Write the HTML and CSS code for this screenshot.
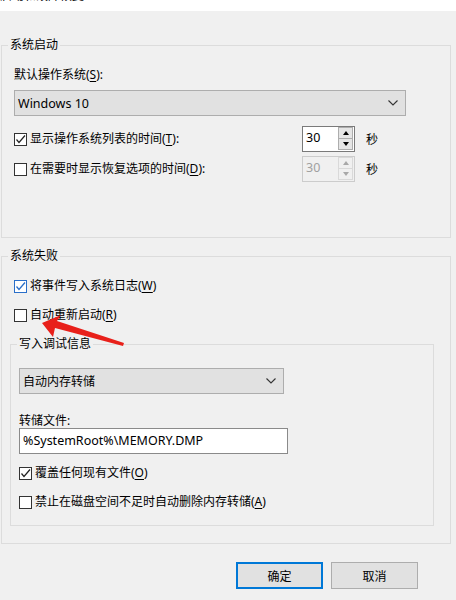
FILE: index.html
```html
<!DOCTYPE html>
<html lang="zh-CN">
<head>
<meta charset="utf-8">
<title>启动和故障恢复</title>
<link rel="stylesheet" href="styles.css">
</head>
<body>
<div class="titlebar"><span class="title-text">启动和故障恢复</span></div>
<div class="dialog">
  <fieldset class="group">
    <legend>系统启动</legend>
    <div class="startup-body">
      <div class="field-label">默认操作系统(<u>S</u>):</div>
      <div class="select select-os">
        <span class="latin">Windows 10</span>
        <svg class="chev" width="10" height="6" viewBox="0 0 10 6"><polyline points="0.5,0.5 5,5 9.5,0.5" fill="none" stroke="#333" stroke-width="1.1"/></svg>
      </div>
      <div class="spin-row">
        <div class="check check-wide">
          <span class="box"><svg width="11" height="11" viewBox="0 0 11 11"><polyline points="1.5,5.5 4,8.5 10,1.5" fill="none" stroke="#222" stroke-width="1.2"/></svg></span>
          <span>显示操作系统列表的时间(<u>T</u>):</span>
        </div>
        <div class="spinner">
          <span class="spin-value latin">30</span>
          <span class="spin-btns"><span class="spin-btn"><i class="tri-up"></i></span><span class="spin-btn"><i class="tri-down"></i></span></span>
        </div>
        <span class="unit">秒</span>
      </div>
      <div class="spin-row row-second">
        <div class="check check-wide">
          <span class="box"></span>
          <span>在需要时显示恢复选项的时间(<u>D</u>):</span>
        </div>
        <div class="spinner disabled">
          <span class="spin-value latin">30</span>
          <span class="spin-btns"><span class="spin-btn"><i class="tri-up"></i></span><span class="spin-btn"><i class="tri-down"></i></span></span>
        </div>
        <span class="unit">秒</span>
      </div>
    </div>
  </fieldset>

  <fieldset class="group group-fail">
    <legend>系统失败</legend>
    <div class="fail-body">
      <div class="check check-row first-check">
        <span class="box box-blue"><svg width="11" height="11" viewBox="0 0 11 11"><polyline points="1.5,5.5 4,8.5 10,1.5" fill="none" stroke="#2a6fc9" stroke-width="1.3"/></svg></span>
        <span>将事件写入系统日志(<u>W</u>)</span>
      </div>
      <div class="check check-row second-check">
        <span class="box"></span>
        <span>自动重新启动(<u>R</u>)</span>
      </div>
      <fieldset class="group inner-group">
        <legend>写入调试信息</legend>
        <div class="inner-body">
          <div class="select select-dump">
            <span>自动内存转储</span>
            <svg class="chev" width="10" height="6" viewBox="0 0 10 6"><polyline points="0.5,0.5 5,5 9.5,0.5" fill="none" stroke="#333" stroke-width="1.1"/></svg>
          </div>
          <div class="field-label dump-label">转储文件:</div>
          <div class="textbox latin">%SystemRoot%\MEMORY.DMP</div>
          <div class="check check-row overwrite">
            <span class="box"><svg width="11" height="11" viewBox="0 0 11 11"><polyline points="1.5,5.5 4,8.5 10,1.5" fill="none" stroke="#222" stroke-width="1.2"/></svg></span>
            <span>覆盖任何现有文件(<u>O</u>)</span>
          </div>
          <div class="check check-row disable-auto">
            <span class="box"></span>
            <span>禁止在磁盘空间不足时自动删除内存转储(<u>A</u>)</span>
          </div>
        </div>
      </fieldset>
    </div>
  </fieldset>

  <div class="buttons">
    <button class="btn btn-default">确定</button>
    <button class="btn">取消</button>
  </div>
</div>

<svg class="annotation" width="456" height="600" viewBox="0 0 456 600">
  <polygon points="42,323 61,315 57,321 124,343 123,346 55,328 53,337" fill="#e8201a"/>
</svg>
</body>
</html>
```

FILE: styles.css
```css
html, body {
  margin: 0;
  padding: 0;
}
body {
  width: 456px;
  height: 600px;
  background: #f0f0f0;
  font-family: "Noto Sans", "Noto Sans CJK SC", sans-serif;
  font-size: 12px;
  color: #000;
  position: relative;
  overflow: hidden;
}
u {
  text-decoration: underline;
  text-underline-offset: 2px;
}
.titlebar {
  height: 11px;
  background: #fff;
  overflow: hidden;
}
.title-text {
  display: block;
  margin-top: -11px;
  line-height: 13px;
  padding-left: 0;
}
.dialog {
  padding: 26px 5px 0 1px;
}
.group {
  margin: 0;
  padding: 0;
  border: 1px solid #dcdcdc;
  min-width: 0;
}
.group legend {
  margin-left: 6px;
  padding: 0 2px;
  line-height: 16px;
  font-size: 12px;
}
.startup-body {
  padding: 14px 12px 55px 12px;
}
.field-label {
  line-height: 16px;
  height: 16px;
}
.select {
  box-sizing: border-box;
  height: 26px;
  border: 1px solid #adadad;
  background: #e1e1e1;
  display: flex;
  align-items: center;
  justify-content: space-between;
  padding: 0 7px 0 3px;
}
.select-os {
  width: 392px;
  margin-top: 7px;
}
.latin {
  font-size: 12.5px;
}
.chev {
  display: block;
}
.spin-row {
  display: flex;
  align-items: center;
  height: 26px;
  margin-top: 10px;
}
.row-second {
  margin-top: 4px;
}
.check {
  display: flex;
  align-items: center;
  gap: 3px;
  line-height: 16px;
}
.check-wide {
  width: 288px;
}
.box {
  box-sizing: border-box;
  width: 13px;
  height: 13px;
  border: 1px solid #333;
  background: #fff;
  display: flex;
  align-items: center;
  justify-content: center;
  flex: none;
}
.box svg {
  display: block;
}
.box-blue {
  border-color: #2a6fc9;
}
.spinner {
  box-sizing: border-box;
  width: 53px;
  height: 26px;
  border: 1px solid #7a7a7a;
  background: #fff;
  display: flex;
  justify-content: space-between;
}
.spin-value {
  padding-left: 3px;
  line-height: 22px;
}
.spin-btns {
  display: flex;
  flex-direction: column;
  width: 15px;
  margin: 0 1px 1px 0;
}
.spin-btn {
  flex: 1;
  box-sizing: border-box;
  border: 1px solid #adadad;
  background: #e5e5e5;
  display: flex;
  align-items: center;
  justify-content: center;
}
.spin-btn + .spin-btn {
  border-top: none;
}
.tri-up, .tri-down {
  display: block;
  width: 0;
  height: 0;
  border-left: 3.5px solid transparent;
  border-right: 3.5px solid transparent;
}
.tri-up {
  border-bottom: 4px solid #000;
}
.tri-down {
  border-top: 4px solid #000;
}
.spinner.disabled {
  border-color: #cccccc;
  background: #f0f0f0;
  color: #a0a0a0;
}
.spinner.disabled .spin-btn {
  border-color: #d9d9d9;
  background: #f0f0f0;
}
.spinner.disabled .tri-up {
  border-bottom-color: #a8a8a8;
}
.spinner.disabled .tri-down {
  border-top-color: #a8a8a8;
}
.unit {
  margin-left: 11px;
}
.group-fail {
  margin-top: 10px;
}
.fail-body {
  padding: 0 15px 17px 8px;
}
.check-row {
  height: 16px;
  margin-left: 4px;
}
.first-check {
  margin-top: 14px;
}
.second-check {
  margin-top: 13px;
}
.inner-group {
  margin-top: 13px;
  width: 424px;
  box-sizing: border-box;
}
.inner-body {
  padding: 0 8px 15px 8px;
}
.select-dump {
  width: 265px;
  margin-top: 16px;
}
.dump-label {
  margin-top: 20px;
  line-height: 14px;
  height: 14px;
}
.textbox {
  box-sizing: border-box;
  width: 269px;
  height: 26px;
  border: 1px solid #8a8a8a;
  background: #fff;
  padding-left: 3px;
  line-height: 24px;
}
.inner-body .check-row {
  margin-left: 0;
}
.overwrite {
  margin-top: 11px;
}
.disable-auto {
  margin-top: 13px;
}
.buttons {
  display: flex;
  justify-content: flex-end;
  gap: 8px;
  margin-top: 18px;
  padding-right: 33px;
}
.btn {
  box-sizing: border-box;
  width: 87px;
  height: 27px;
  border: 1px solid #adadad;
  background: #e1e1e1;
  font-family: inherit;
  font-size: 12px;
  color: #000;
  padding: 0;
  margin: 0;
}
.btn-default {
  border: 2px solid #0078d7;
}
.annotation {
  position: absolute;
  left: 0;
  top: 0;
  pointer-events: none;
}
```
